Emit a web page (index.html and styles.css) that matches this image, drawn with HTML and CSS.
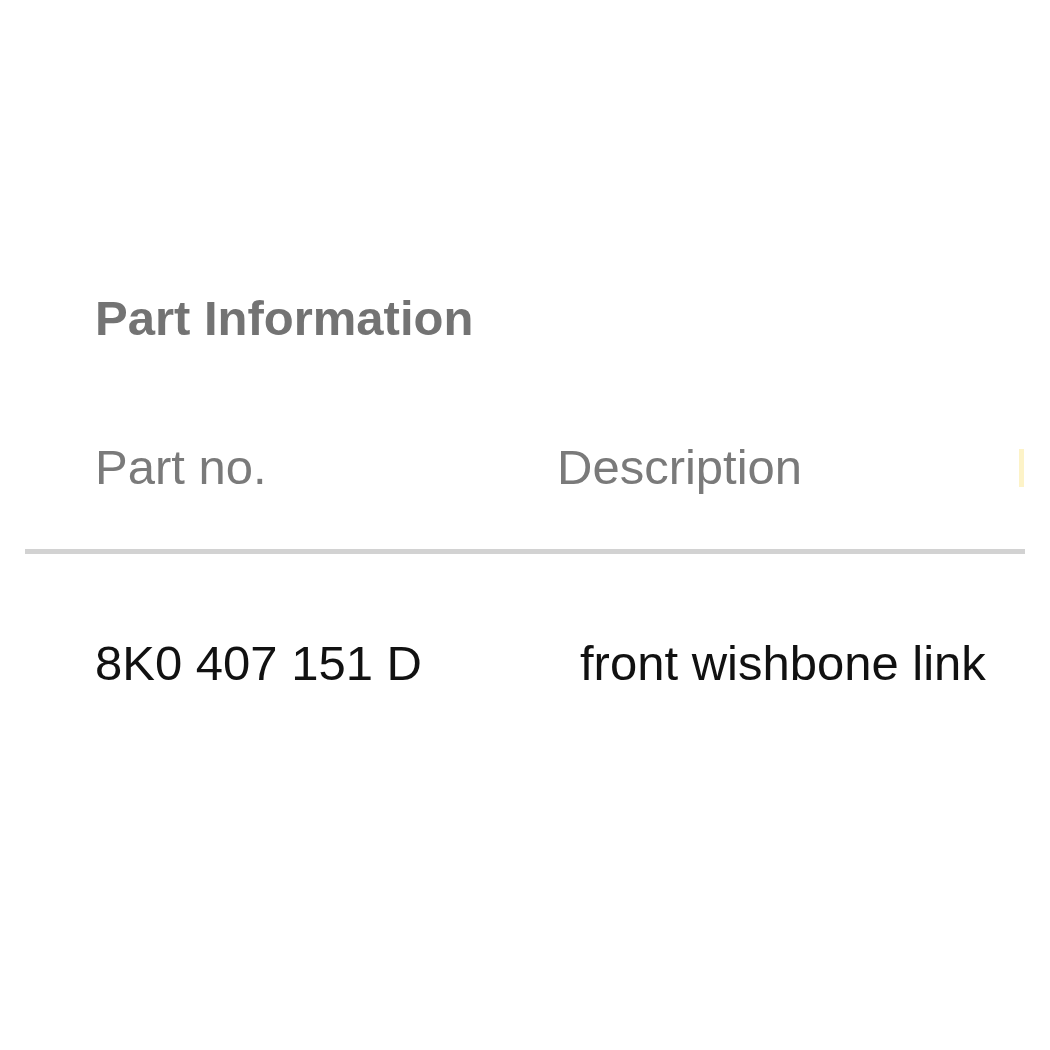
FILE: index.html
```html
<!DOCTYPE html>
<html>
<head>
<meta charset="utf-8">
<link rel="stylesheet" href="styles.css">
</head>
<body>
<div class="panel">
  <h2 class="title">Part Information</h2>
  <div class="row head">
    <div class="cell c1">Part no.</div>
    <div class="cell c2">Description</div>
    <div class="cell c3"><span class="clip"></span></div>
  </div>
  <div class="rule"></div>
  <div class="row data">
    <div class="cell c1">8K0 407 151 D</div>
    <div class="cell c2 pad">front wishbone link</div>
  </div>
</div>
</body>
</html>
```
FILE: styles.css
```css
html, body {
  margin: 0;
  padding: 0;
  background: #ffffff;
}
.panel {
  margin: 0 25px;
  padding-top: 294px;
  font-family: "Liberation Sans", Arial, sans-serif;
  font-size: 49px;
  line-height: 49px;
}
.title {
  margin: 0;
  padding-left: 70px;
  font-size: 49px;
  line-height: 49px;
  font-weight: 700;
  color: #737373;
}
.row {
  display: flex;
  padding-left: 70px;
}
.head {
  margin-top: 100px;
  color: #7a7a7a;
}
.cell {
  white-space: nowrap;
}
.c1 {
  width: 462px;
  flex: none;
}
.c2 {
  flex: 1;
}
.c3 {
  flex: none;
  width: 6px;
  display: flex;
  align-items: center;
}
.clip {
  display: block;
  width: 5px;
  height: 38px;
  background: #fdf3c8;
}
.rule {
  margin-top: 57px;
  height: 5px;
  background: #d2d2d2;
}
.data {
  margin-top: 85px;
  color: #111111;
}
.pad {
  padding-left: 23px;
}
```
